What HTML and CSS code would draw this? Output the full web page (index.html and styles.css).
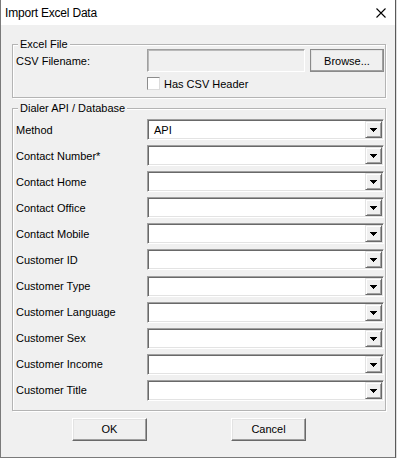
FILE: index.html
```html
<!DOCTYPE html>
<html lang="en">
<head>
    <meta charset="UTF-8">
    <title>Import Excel Data</title>
    <link rel="stylesheet" href="styles.css">
</head>
<body>
    <div class="window">
        <div class="titlebar">
            <span class="title">Import Excel Data</span>
            <svg class="close" width="10" height="10" viewBox="0 0 10 10">
                <path d="M0.5 0.5L9.5 9.5M9.5 0.5L0.5 9.5" stroke="#000" stroke-width="1.1" fill="none"/>
            </svg>
        </div>

        <div class="content">
            <div class="group group-file">
                <span class="group-title">Excel File</span>
                <div class="row row-file">
                    <label class="field-label">CSV Filename:</label>
                    <div class="textbox"></div>
                    <button class="btn btn-browse">Browse...</button>
                </div>
                <div class="row row-check">
                    <span class="field-label"></span>
                    <span class="checkbox"></span>
                    <span class="check-label">Has CSV Header</span>
                </div>
            </div>

            <div class="group group-api">
                <span class="group-title">Dialer API / Database</span>
                <div class="fields">
                    <div class="row">
                        <label class="field-label">Method</label>
                        <div class="combo"><span class="combo-text">API</span><span class="combo-btn"><svg width="7" height="4" viewBox="0 0 7 4"><path d="M0 0h7v1h-1v1h-1v1h-1v1h-1v-1h-1v-1h-1v-1h-1z" fill="#000"/></svg></span></div>
                    </div>
                    <div class="row">
                        <label class="field-label">Contact Number*</label>
                        <div class="combo"><span class="combo-text"></span><span class="combo-btn"><svg width="7" height="4" viewBox="0 0 7 4"><path d="M0 0h7v1h-1v1h-1v1h-1v1h-1v-1h-1v-1h-1v-1h-1z" fill="#000"/></svg></span></div>
                    </div>
                    <div class="row">
                        <label class="field-label">Contact Home</label>
                        <div class="combo"><span class="combo-text"></span><span class="combo-btn"><svg width="7" height="4" viewBox="0 0 7 4"><path d="M0 0h7v1h-1v1h-1v1h-1v1h-1v-1h-1v-1h-1v-1h-1z" fill="#000"/></svg></span></div>
                    </div>
                    <div class="row">
                        <label class="field-label">Contact Office</label>
                        <div class="combo"><span class="combo-text"></span><span class="combo-btn"><svg width="7" height="4" viewBox="0 0 7 4"><path d="M0 0h7v1h-1v1h-1v1h-1v1h-1v-1h-1v-1h-1v-1h-1z" fill="#000"/></svg></span></div>
                    </div>
                    <div class="row">
                        <label class="field-label">Contact Mobile</label>
                        <div class="combo"><span class="combo-text"></span><span class="combo-btn"><svg width="7" height="4" viewBox="0 0 7 4"><path d="M0 0h7v1h-1v1h-1v1h-1v1h-1v-1h-1v-1h-1v-1h-1z" fill="#000"/></svg></span></div>
                    </div>
                    <div class="row">
                        <label class="field-label">Customer ID</label>
                        <div class="combo"><span class="combo-text"></span><span class="combo-btn"><svg width="7" height="4" viewBox="0 0 7 4"><path d="M0 0h7v1h-1v1h-1v1h-1v1h-1v-1h-1v-1h-1v-1h-1z" fill="#000"/></svg></span></div>
                    </div>
                    <div class="row">
                        <label class="field-label">Customer Type</label>
                        <div class="combo"><span class="combo-text"></span><span class="combo-btn"><svg width="7" height="4" viewBox="0 0 7 4"><path d="M0 0h7v1h-1v1h-1v1h-1v1h-1v-1h-1v-1h-1v-1h-1z" fill="#000"/></svg></span></div>
                    </div>
                    <div class="row">
                        <label class="field-label">Customer Language</label>
                        <div class="combo"><span class="combo-text"></span><span class="combo-btn"><svg width="7" height="4" viewBox="0 0 7 4"><path d="M0 0h7v1h-1v1h-1v1h-1v1h-1v-1h-1v-1h-1v-1h-1z" fill="#000"/></svg></span></div>
                    </div>
                    <div class="row">
                        <label class="field-label">Customer Sex</label>
                        <div class="combo"><span class="combo-text"></span><span class="combo-btn"><svg width="7" height="4" viewBox="0 0 7 4"><path d="M0 0h7v1h-1v1h-1v1h-1v1h-1v-1h-1v-1h-1v-1h-1z" fill="#000"/></svg></span></div>
                    </div>
                    <div class="row">
                        <label class="field-label">Customer Income</label>
                        <div class="combo"><span class="combo-text"></span><span class="combo-btn"><svg width="7" height="4" viewBox="0 0 7 4"><path d="M0 0h7v1h-1v1h-1v1h-1v1h-1v-1h-1v-1h-1v-1h-1z" fill="#000"/></svg></span></div>
                    </div>
                    <div class="row">
                        <label class="field-label">Customer Title</label>
                        <div class="combo"><span class="combo-text"></span><span class="combo-btn"><svg width="7" height="4" viewBox="0 0 7 4"><path d="M0 0h7v1h-1v1h-1v1h-1v1h-1v-1h-1v-1h-1v-1h-1z" fill="#000"/></svg></span></div>
                    </div>
                </div>
            </div>

            <div class="footer">
                <button class="btn btn-dialog">OK</button>
                <button class="btn btn-dialog">Cancel</button>
            </div>
        </div>
    </div>
</body>
</html>
```

FILE: styles.css
```css
* {
    box-sizing: border-box;
}

body {
    margin: 0;
    background-color: #dedede;
    font-family: "Liberation Sans", Arial, sans-serif;
    font-size: 11px;
    color: #000;
}

.window {
    width: 396px;
    height: 458px;
    background-color: #f0f0f0;
    border-left: 1px solid #7a7a7a;
    border-right: 1px solid #5a5a5a;
    border-bottom: 1px solid #7a7a7a;
    display: flex;
    flex-direction: column;
}

.titlebar {
    height: 25px;
    flex-shrink: 0;
    background-color: #fff;
    display: flex;
    align-items: center;
    justify-content: space-between;
    padding: 0 9px 0 4px;
}

.title {
    font-size: 12px;
    letter-spacing: -0.2px;
}

.close {
    display: block;
}

.content {
    padding: 19px 9px 0 11px;
}

.group {
    position: relative;
    border: 1px solid #b4b4b4;
    box-shadow: inset 1px 1px 0 #fff, 1px 1px 0 #fff;
    padding: 0 1px 0 3px;
}

.group-title {
    position: absolute;
    top: -7px;
    left: 5px;
    padding: 0 2px;
    line-height: 13px;
    background-color: #f0f0f0;
}

.group-file {
    padding-top: 4px;
    padding-bottom: 7px;
}

.group-api {
    margin-top: 10px;
    padding-top: 10px;
    padding-bottom: 9px;
}

.row {
    display: flex;
    align-items: center;
}

.row-file {
    height: 23px;
}

.row-check {
    margin-top: 5px;
    height: 13px;
}

.fields {
    display: flex;
    flex-direction: column;
    gap: 5.1px;
}

.fields .row {
    height: 21px;
}

.field-label {
    width: 131px;
    flex-shrink: 0;
    white-space: nowrap;
}

.textbox {
    width: 158px;
    height: 23px;
    background-color: #f0f0f0;
    border: 1px solid;
    border-color: #a0a0a0 #fff #fff #a0a0a0;
    box-shadow: inset 1px 1px 0 #b9b9b9;
}

.btn {
    font-family: inherit;
    font-size: 11px;
    color: #000;
    background-color: #f0f0f0;
    border: 1px solid;
    border-color: #fff #696969 #696969 #fff;
    box-shadow: inset -1px -1px 0 #a0a0a0, inset 1px 1px 0 #e3e3e3;
    padding: 0;
    height: 23px;
    border-radius: 0;
}

.btn-browse {
    width: 74px;
    margin-left: 5px;
    outline: 1px solid #8a8a8a;
    outline-offset: -1px;
    border-color: #fff #555 #555 #fff;
}

.checkbox {
    width: 13px;
    height: 13px;
    background-color: #fff;
    border: 1px solid;
    border-color: #8c8c8c #dcdcdc #dcdcdc #8c8c8c;
}

.check-label {
    margin-left: 4px;
}

.combo {
    width: 237px;
    height: 21px;
    background-color: #fff;
    border: 1px solid;
    border-color: #a0a0a0 #fff #fff #a0a0a0;
    box-shadow: inset 1px 1px 0 #696969, inset -1px -1px 0 #e3e3e3;
    display: flex;
    align-items: center;
    padding: 1px 1px 1px 1px;
}

.combo-text {
    flex-grow: 1;
    padding-left: 5px;
}

.combo-btn {
    width: 17px;
    height: 17px;
    background-color: #f0f0f0;
    border: 1px solid;
    border-color: #e3e3e3 #696969 #696969 #e3e3e3;
    box-shadow: inset 1px 1px 0 #fff, inset -1px -1px 0 #a0a0a0;
    display: flex;
    align-items: center;
    justify-content: center;
    padding-top: 1px;
}

.combo-btn svg {
    display: block;
}

.footer {
    display: flex;
    gap: 84px;
    padding-left: 60px;
    margin-top: 7px;
}

.btn-dialog {
    width: 75px;
}
```
